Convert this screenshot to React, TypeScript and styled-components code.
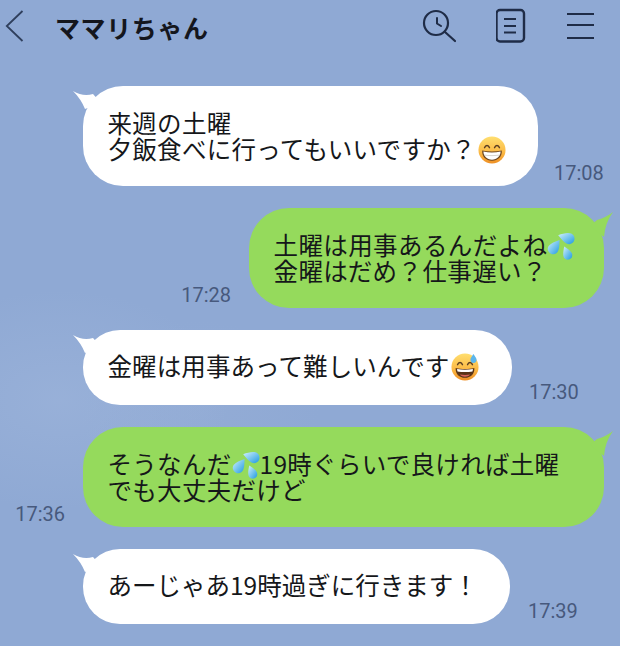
import React from "react";
import styled, { createGlobalStyle } from "styled-components";

const Global = createGlobalStyle`
  html, body { margin: 0; padding: 0; }
  body { width: 620px; height: 646px; overflow: hidden; font-family: "Noto Sans CJK JP", "Noto Sans", sans-serif; }
`;

const Screen = styled.div`
  width: 620px;
  height: 646px;
  overflow: hidden;
  display: flex;
  flex-direction: column;
  background:
    radial-gradient(ellipse 170px 110px at 60px 400px, rgba(164, 186, 222, 0.42), rgba(164, 186, 222, 0) 100%),
    radial-gradient(ellipse 120px 90px at 200px 410px, rgba(155, 178, 216, 0.3), rgba(155, 178, 216, 0) 100%),
    #8fa9d4;
`;

const Header = styled.header`
  height: 86px;
  flex: none;
  display: flex;
  align-items: flex-start;
  padding: 8px 26px 0 5px;
  box-sizing: border-box;
`;

const BackButton = styled.div`
  width: 20px;
  height: 36px;
  flex: none;
`;

const Title = styled.h1`
  margin: 1px 0 0 30px;
  font-size: 25px;
  line-height: 36px;
  font-weight: 700;
  letter-spacing: 0.6px;
  color: #14161d;
  flex: 1;
`;

const Tools = styled.div`
  display: flex;
  align-items: center;
  gap: 40px;
`;

const Thread = styled.main`
  display: flex;
  flex-direction: column;
  gap: 22px;
  padding: 0 16px;
`;

const Row = styled.div<{ $mine?: boolean }>`
  display: flex;
  align-items: flex-end;
  justify-content: ${(p) => (p.$mine ? "flex-end" : "flex-start")};
  padding-left: ${(p) => (p.$mine ? "0" : "67px")};
`;

const Bubble = styled.div<{ $mine?: boolean; $w: number; $short?: boolean; $track: number }>`
  position: relative;
  flex: none;
  box-sizing: border-box;
  width: ${(p) => p.$w}px;
  height: ${(p) => (p.$short ? 75 : 100)}px;
  padding: ${(p) => (p.$short ? "23px" : "24px")} 0 0 24.5px;
  border-radius: ${(p) => (p.$short ? 37 : 40)}px;
  background: ${(p) => (p.$mine ? "#95da5c" : "#ffffff")};
  color: #15171a;
  font-size: 24.5px;
  line-height: 26px;
  letter-spacing: ${(p) => p.$track}px;
  white-space: nowrap;
`;

const Tail = styled.svg<{ $mine?: boolean }>`
  position: absolute;
  top: 3px;
  ${(p) => (p.$mine ? "right: -10px;" : "left: -10px;")}
  width: 34px;
  height: 28px;
`;

const Time = styled.time<{ $gap: number }>`
  flex: none;
  font-family: Roboto, "Liberation Sans", sans-serif;
  font-size: 20px;
  line-height: 24px;
  color: #47597d;
  margin: 0 ${(p) => p.$gap}px 1px;
  &:first-child { margin-left: 0; }
  &:last-child { margin-right: 0; }
`;

const FaceIcon = styled.svg`
  display: inline-block;
  width: 28px;
  height: 28px;
  margin: -6px 0 -5px 2px;
`;

const DropsIcon = styled.svg`
  display: inline-block;
  width: 28px;
  height: 28px;
  margin: -6px 0 -5px 0;
`;

const Face = ({ id, sweat }: { id: string; sweat?: boolean }) => (
  <FaceIcon viewBox="0 0 30 30">
    <defs>
      <linearGradient id={id} x1="0" y1="0" x2="0" y2="1">
        <stop offset="0" stopColor="#ffdf70" />
        <stop offset="0.6" stopColor="#fbb843" />
        <stop offset="1" stopColor="#ee8f24" />
      </linearGradient>
    </defs>
    <circle cx="15" cy="15" r="14.500" fill={`url(#${id})`} />
    <path d="M7 12.500c1-3 4.300-3 5.300 0M17.700 12.500c1-3 4.300-3 5.300 0" fill="none" stroke="#5a3d22" strokeWidth="1.500" strokeLinecap="round" />
    {sweat ? (
      <>
        <path d="M5 16c6 1.500 14 1.500 20 0 .5 6.500-4 10.500-10 10.500S4.500 22.500 5 16z" fill="#5a3418" />
        <path d="M6.500 17.200c5.500 1 11.500 1 17 0 0 1-.2 1.800-.5 2.600-5 .8-11 .8-16 0-.3-.8-.5-1.600-.5-2.600z" fill="#fff" />
        <path d="M9.500 23c3.500.6 7.500.6 11 0-1.300 1.700-3.300 2.400-5.500 2.400S10.800 24.700 9.500 23z" fill="#d9655a" />
        <path d="M24 1c1.800 2.600 3.400 4.400 3.400 6.300a3.300 3.300 0 0 1-6.600 0C20.800 5.400 22.300 3.600 24 1z" fill="#5cb6ec" />
      </>
    ) : (
      <>
        <path d="M4.500 15.500c6.500 1.500 14.500 1.500 21 0 .5 6.500-4.200 11-10.500 11S4 22 4.500 15.500z" fill="#6b4520" />
        <path d="M5.800 16.700c5.800 1.200 12.600 1.200 18.400 0 0 5-3.900 8.700-9.200 8.700S5.800 21.700 5.800 16.700z" fill="#fff" />
        <path d="M6.300 20.400c5.500.8 11.900.8 17.400 0" fill="none" stroke="#b9b3a8" strokeWidth=".6" />
      </>
    )}
  </FaceIcon>
);

const Drops = ({ id }: { id: string }) => (
  <DropsIcon viewBox="0 0 30 30">
    <defs>
      <linearGradient id={id} x1="0" y1="0" x2="1" y2="1">
        <stop offset="0" stopColor="#d2f1fd" />
        <stop offset="1" stopColor="#1f9ae0" />
      </linearGradient>
    </defs>
    <path d="M13.500 8.500c-.3 3.500 0 7.500-1.300 11-1.200 3.500-4.800 5.400-8 3.800C1 21.700-.200 18 1.700 15 3.900 12 8.800 10.300 13.500 8.500z" fill={`url(#${id})`} />
    <path d="M12 3.500c5-1.800 11-3.400 14.500-1.500 3 1.700 3.700 5.300 2.300 8-1.500 2.800-5.200 3.900-8 2.300C17.500 10.500 15 7 12 3.500z" fill={`url(#${id})`} />
    <path d="M18.500 15.500c3.200 2 6.500 4.300 8 7 1.300 2.600.3 5.500-2.200 6.700-2.500 1.200-5.300.2-6.300-2.200-1.200-3-.4-7.500.5-11.500z" fill={`url(#${id})`} />
  </DropsIcon>
);

const BubbleTail = ({ mine, fill }: { mine?: boolean; fill: string }) => (
  <Tail $mine={mine} viewBox="0 0 34 28">
    {mine ? (
      <path d="M33 1Q27 6 17 9L10 15L24 26Q25 12 33 1z" fill={fill} />
    ) : (
      <path d="M0 2Q10 8 20 5L28 14L12 20Q8 10 0 2z" fill={fill} />
    )}
  </Tail>
);

export default function App() {
  return (
    <Screen>
      <Global />
      <Header>
        <BackButton>
          <svg width="20" height="36" viewBox="0 0 20 36" fill="none">
            <path d="M17.500 3 L1.800 18 L17.500 33" stroke="#2f3f5c" strokeWidth="1.800" />
          </svg>
        </BackButton>
        <Title>ママリちゃん</Title>
        <Tools>
          <svg width="34" height="36" viewBox="0 0 34 36" fill="none" stroke="#1f2c47" strokeLinecap="round">
            <circle cx="14" cy="15" r="12" strokeWidth="2.200" />
            <path d="M15 10 V15.500 L19 18" strokeWidth="2" />
            <path d="M23 24 L33 33" strokeWidth="2.200" />
          </svg>
          <svg width="30" height="36" viewBox="0 0 30 36" fill="none" stroke="#1f2c47">
            <rect x="0.500" y="2" width="27.500" height="31.500" rx="3.500" strokeWidth="2.400" />
            <path d="M8 11 H20 M8 18 H20 M8 24.500 H20" strokeWidth="2" />
          </svg>
          <svg width="28" height="36" viewBox="0 0 28 36" fill="none" stroke="#1f2c47" strokeWidth="2.200">
            <path d="M1 6 H28 M1 17 H28 M1 30 H28" />
          </svg>
        </Tools>
      </Header>
      <Thread>
        <Row>
          <Bubble $w={455} $track={0.3}>
            <BubbleTail fill="#fff" />
            来週の土曜<br />夕飯食べに行ってもいいですか？<Face id="g1" />
          </Bubble>
          <Time $gap={16}>17:08</Time>
        </Row>
        <Row $mine>
          <Time $gap={18}>17:28</Time>
          <Bubble $mine $w={355} $track={0.4}>
            <BubbleTail mine fill="#95da5c" />
            土曜は用事あるんだよね<Drops id="d1" /><br />金曜はだめ？仕事遅い？
          </Bubble>
        </Row>
        <Row>
          <Bubble $w={429} $short $track={0.1}>
            <BubbleTail fill="#fff" />
            金曜は用事あって難しいんです<Face id="g2" sweat />
          </Bubble>
          <Time $gap={17}>17:30</Time>
        </Row>
        <Row $mine>
          <Time $gap={18}>17:36</Time>
          <Bubble $mine $w={521} $track={0.3}>
            <BubbleTail mine fill="#95da5c" />
            そうなんだ<Drops id="d2" />19時ぐらいで良ければ土曜<br />でも大丈夫だけど
          </Bubble>
        </Row>
        <Row>
          <Bubble $w={427} $short $track={0}>
            <BubbleTail fill="#fff" />
            あーじゃあ19時過ぎに行きます！
          </Bubble>
          <Time $gap={18}>17:39</Time>
        </Row>
      </Thread>
    </Screen>
  );
}
